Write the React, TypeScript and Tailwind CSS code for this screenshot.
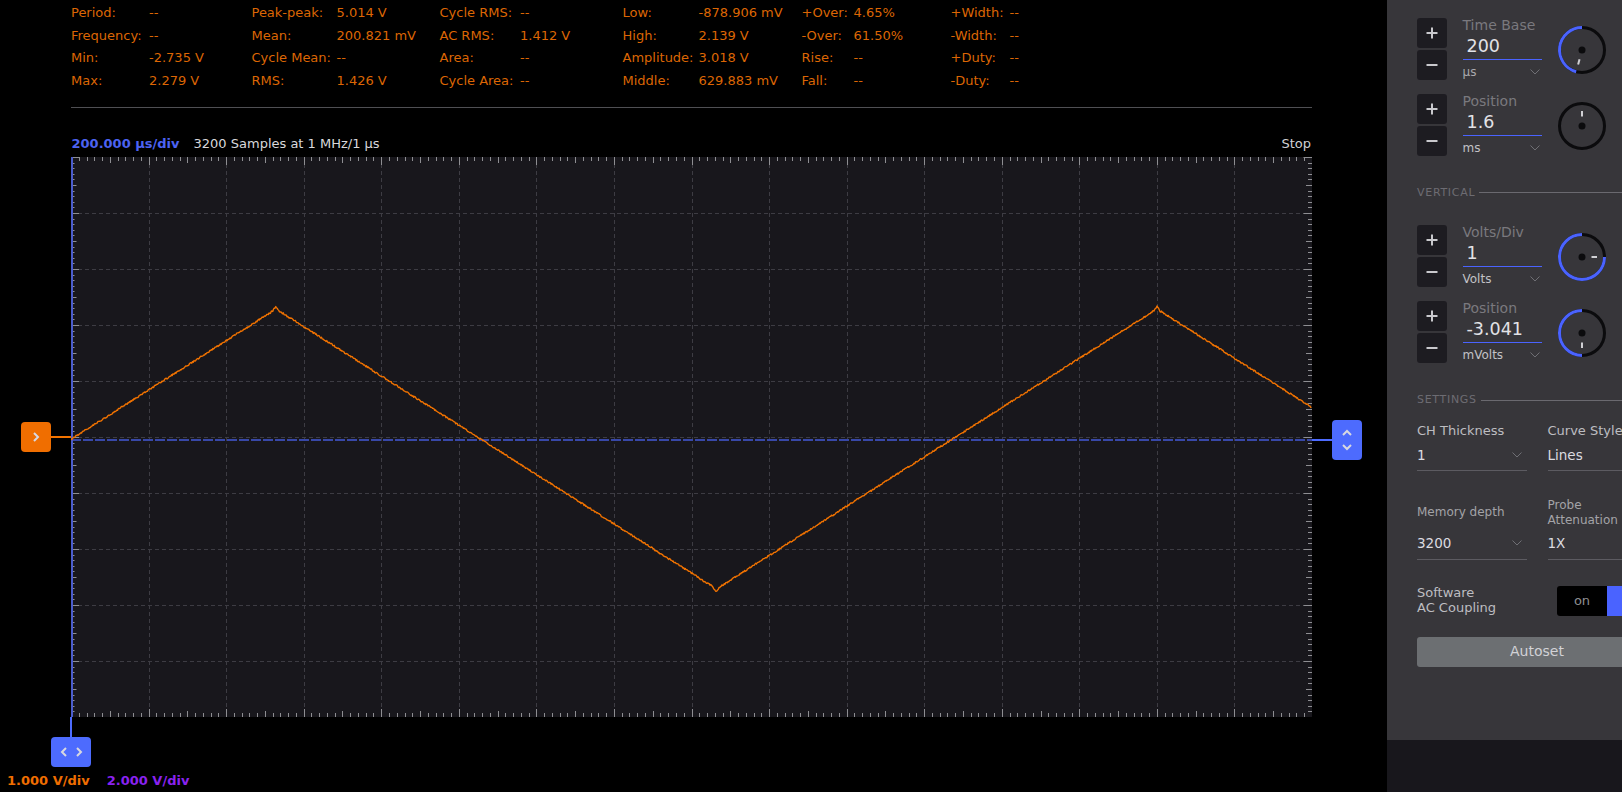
import React from 'react';

type Cell = [string, string];

const rows: Cell[][] = [
    [['Period:', '--'], ['Peak-peak:', '5.014 V'], ['Cycle RMS:', '--'], ['Low:', '-878.906 mV'], ['+Over:', '4.65%'], ['+Width:', '--']],
    [['Frequency:', '--'], ['Mean:', '200.821 mV'], ['AC RMS:', '1.412 V'], ['High:', '2.139 V'], ['-Over:', '61.50%'], ['-Width:', '--']],
    [['Min:', '-2.735 V'], ['Cycle Mean:', '--'], ['Area:', '--'], ['Amplitude:', '3.018 V'], ['Rise:', '--'], ['+Duty:', '--']],
    [['Max:', '2.279 V'], ['RMS:', '1.426 V'], ['Cycle Area:', '--'], ['Middle:', '629.883 mV'], ['Fall:', '--'], ['-Duty:', '--']],
];

const PW = 1241;
const PH = 560;

// triangle wave, peaks at x=205 and x=1086, valley at x=645
function wavePoints() {
    const pts: string[] = [];
    const half = 440.5;
    for (let x = 0; x <= PW; x += 0.75) {
        let p = (((x - 205) % (2 * half)) + 2 * half) % (2 * half);
        let y = p < half ? 152 + p * (280 / half) : 432 - (p - half) * (280 / half);
        const n = Math.sin(x * 12.9898) * 43758.5453;
        y += (n - Math.floor(n) - 0.5) * 1.6;
        // small glitch near the turning points
        const dPeak = Math.min(Math.abs(x - 205), Math.abs(x - 1086));
        if (dPeak < 3) y -= 2.5 - dPeak * 0.6;
        if (Math.abs(x - 645) < 3) y += 2.5 - Math.abs(x - 645) * 0.6;
        pts.push(`${x.toFixed(2)},${y.toFixed(2)}`);
    }
    return pts.join(' ');
}

function Plot() {
    const ticksX = [];
    for (let i = 0; i <= 160; i++) {
        const x = Math.round((i * PW) / 160) + 0.5;
        const len = i % 10 === 0 ? 8 : i % 5 === 0 ? 6 : 4;
        ticksX.push(<line key={'t' + i} x1={x} y1={0} x2={x} y2={len} />);
        ticksX.push(<line key={'b' + i} x1={x} y1={PH} x2={x} y2={PH - len} />);
    }
    const ticksY = [];
    for (let i = 0; i <= 100; i++) {
        const y = Math.round((i * PH) / 100) + 0.5;
        const len = i % 10 === 0 ? 8 : i % 5 === 0 ? 5.5 : 3.5;
        ticksY.push(<line key={'l' + i} x1={0} y1={y} x2={len} y2={y} />);
        ticksY.push(<line key={'r' + i} x1={PW} y1={y} x2={PW - len - 0.5} y2={y} />);
    }
    const gridV = [];
    for (let k = 1; k < 16; k++) {
        const x = Math.round((k * PW) / 16) + 0.5;
        gridV.push(<line key={k} x1={x} y1={0} x2={x} y2={PH} />);
    }
    const gridH = [];
    for (let k = 1; k < 10; k++) {
        const y = k * 56 + 0.5;
        gridH.push(<line key={k} x1={0} y1={y} x2={PW} y2={y} />);
    }
    return (
        <svg width={PW} height={PH} className="block shrink-0 bg-[#18171c]">
            <g stroke="#3d3c43" strokeWidth={1} strokeDasharray="4 3">
                {gridV}
                {gridH}
            </g>
            <g stroke="#8e8e92" strokeWidth={1}>
                {ticksX}
                {ticksY}
            </g>
            <line x1={0} y1={283} x2={PW} y2={283} stroke="#3848a8" strokeWidth={2} strokeDasharray="10 2" />
            <line x1={1} y1={0} x2={1} y2={PH} stroke="#4a5ccc" strokeWidth={2} />
            <polyline points={wavePoints()} fill="none" stroke="#f27300" strokeWidth={1.35} strokeLinejoin="round" />
        </svg>
    );
}

function Chevron({ dir }: { dir: 'left' | 'right' | 'up' | 'down' }) {
    const d = {
        right: 'M2 1 L6 5 L2 9',
        left: 'M6 1 L2 5 L6 9',
        up: 'M1 6 L5 2 L9 6',
        down: 'M1 2 L5 6 L9 2',
    }[dir];
    const horiz = dir === 'left' || dir === 'right';
    return (
        <svg width={horiz ? 8 : 10} height={horiz ? 10 : 8} viewBox={horiz ? '0 0 8 10' : '0 0 10 8'}>
            <path d={d} fill="none" stroke="#d8d8e0" strokeWidth={2} />
        </svg>
    );
}

function Knob({ angle }: { angle: number }) {
    const r = 22.5;
    const c = 25;
    const pt = (a: number, rr: number) => {
        const t = (a * Math.PI) / 180;
        return [c + rr * Math.sin(t), c - rr * Math.cos(t)];
    };
    const [sx, sy] = pt(angle, r);
    const sweep = 360 - angle;
    const [i1x, i1y] = pt(angle, 9.5);
    const [i2x, i2y] = pt(angle, 15);
    return (
        <svg width={50} height={50} className="shrink-0">
            <circle cx={c} cy={c} r={r} fill="none" stroke="#0b0b0d" strokeWidth={3} />
            {angle > 0 && (
                <path d={`M${sx} ${sy} A${r} ${r} 0 ${sweep > 180 ? 1 : 0} 1 ${c} ${c - r}`} fill="none" stroke="#4a63ff" strokeWidth={3} />
            )}
            <circle cx={c} cy={c} r={3.5} fill="#0b0b0d" />
            <line x1={i1x} y1={i1y} x2={i2x} y2={i2y} stroke="#d0d0d4" strokeWidth={2} />
        </svg>
    );
}

function StepButtons() {
    return (
        <div className="flex w-[30px] shrink-0 flex-col gap-[2px]">
            <div className="flex h-[30px] items-center justify-center rounded-[3px] bg-[#1d1c21]">
                <svg width={12} height={12}>
                    <path d="M6 0.5 V11.5 M0.5 6 H11.5" stroke="#c9c9cd" strokeWidth={2} />
                </svg>
            </div>
            <div className="flex h-[30px] items-center justify-center rounded-[3px] bg-[#1d1c21]">
                <svg width={12} height={12}>
                    <path d="M0.5 6 H11.5" stroke="#c9c9cd" strokeWidth={2} />
                </svg>
            </div>
        </div>
    );
}

function SmallDown() {
    return (
        <svg width={10} height={6} className="shrink-0">
            <path d="M0.5 0.5 L5 5 L9.5 0.5" fill="none" stroke="#6f6f74" strokeWidth={1} />
        </svg>
    );
}

function KnobRow({ label, value, unit, unitColor, angle }: { label: string; value: string; unit: string; unitColor: string; angle: number }) {
    return (
        <div className="flex items-start">
            <StepButtons />
            <div className="ml-[15.5px] flex w-[79px] flex-col">
                <div className="h-[14px] text-[14px] leading-[14px] text-[#7a797e]">{label}</div>
                <div className="flex h-[28px] items-end border-b border-[#4a63ff] pb-[2px] pl-[4px] text-[17.5px] leading-[22px] text-[#e2e2e6]">{value}</div>
                <div className={`mt-[5px] flex h-[14px] items-center justify-between pr-[2px] text-[12px] leading-[14px] ${unitColor}`}>
                    <span>{unit}</span>
                    <SmallDown />
                </div>
            </div>
            <div className="ml-[15px] mt-[7px]">
                <Knob angle={angle} />
            </div>
        </div>
    );
}

function SectionTitle({ text, className }: { text: string; className: string }) {
    return (
        <div className={`flex h-[14px] items-center gap-[4px] ${className}`}>
            <span className="text-[11px] leading-[14px] tracking-[0.7px] text-[#6d6c72]">{text}</span>
            <div className="h-px flex-1 bg-[#6a696f]" />
        </div>
    );
}

function SelectCell({ value, chevron }: { value: string; chevron?: boolean }) {
    return (
        <div className="flex h-[32px] w-[110px] items-center justify-between border-b border-[#5c5b61] pr-[5px] text-[13.5px] leading-[32px] text-[#dcdce0]">
            <span>{value}</span>
            {chevron && <SmallDown />}
        </div>
    );
}

function Panel() {
    return (
        <div className="flex w-[300px] shrink-0 flex-col">
            <div className="flex h-[740px] flex-col bg-[#37363a] pl-[30px] pt-[18px]">
                <div className="flex flex-col gap-[14px]">
                    <KnobRow label="Time Base" value="200" unit="µs" unitColor="text-[#a9a9ad]" angle={195} />
                    <KnobRow label="Position" value="1.6" unit="ms" unitColor="text-[#c2c2c6]" angle={0} />
                </div>
                <SectionTitle text="VERTICAL" className="mt-[29.5px]" />
                <div className="mt-[25px] flex flex-col gap-[14.5px]">
                    <KnobRow label="Volts/Div" value="1" unit="Volts" unitColor="text-[#c2c2c6]" angle={90} />
                    <KnobRow label="Position" value="-3.041" unit="mVolts" unitColor="text-[#c2c2c6]" angle={180.01} />
                </div>
                <SectionTitle text="SETTINGS" className="mt-[30px]" />
                <div className="mt-[16px] flex gap-[20.5px]">
                    <div className="flex w-[110px] flex-col">
                        <div className="h-[16px] text-[13px] leading-[16px] text-[#bdbdc1]">CH Thickness</div>
                        <SelectCell value="1" chevron />
                    </div>
                    <div className="flex w-[110px] flex-col">
                        <div className="h-[16px] whitespace-nowrap text-[13px] leading-[16px] text-[#bdbdc1]">Curve Style</div>
                        <SelectCell value="Lines" />
                    </div>
                </div>
                <div className="mt-[26.5px] flex gap-[20.5px]">
                    <div className="flex w-[110px] flex-col">
                        <div className="flex h-[30px] items-center text-[12px] leading-[15px] text-[#a3a3a7]">Memory depth</div>
                        <SelectCell value="3200" chevron />
                    </div>
                    <div className="flex w-[110px] flex-col">
                        <div className="flex h-[30px] flex-col justify-center text-[12px] leading-[15px] text-[#a3a3a7]">
                            <span>Probe</span>
                            <span>Attenuation</span>
                        </div>
                        <SelectCell value="1X" />
                    </div>
                </div>
                <div className="mt-[26.5px] flex items-center">
                    <div className="w-[140px] text-[13px] leading-[14.6px] text-[#bdbdc1]">
                        Software
                        <br />
                        AC Coupling
                    </div>
                    <div className="flex h-[29.5px] w-[100px] overflow-hidden rounded-[3px]">
                        <div className="flex w-[50px] items-center justify-center bg-black text-[13px] text-[#8e8e92]">on</div>
                        <div className="flex-1 bg-[#4a63ff]" />
                    </div>
                </div>
                <div className="mt-[21px] flex h-[30px] w-[240px] items-center justify-center rounded-[3px] bg-[#6c6f72] text-[14px] text-[#d2d2d6]">
                    Autoset
                </div>
            </div>
            <div className="flex-1 bg-[#18171c]" />
        </div>
    );
}

export default function App() {
    const widths = ['w-[78px]', 'w-[102.5px]', 'w-[85px]', 'w-[103px]', 'w-[80.5px]', 'w-[102.5px]', 'w-[76px]', 'w-[103px]', 'w-[52px]', 'w-[97px]', 'w-[59px]', 'w-[60px]'];
    return (
        <div className="flex h-[792px] w-[1622px] overflow-hidden bg-black font-['DejaVu_Sans',sans-serif]">
            <div className="flex w-[1387px] shrink-0 flex-col">
                <div className="flex flex-col pl-[71px] pt-[2px] text-[13px] leading-[22.5px] text-[#dc6604]">
                    {rows.map((row, ri) => (
                        <div key={ri} className="flex">
                            {row.map(([label, value], ci) => (
                                <React.Fragment key={ci}>
                                    <span className={`${widths[ci * 2]} shrink-0 whitespace-nowrap`}>{label}</span>
                                    <span className={`${widths[ci * 2 + 1]} shrink-0 whitespace-nowrap`}>{value}</span>
                                </React.Fragment>
                            ))}
                        </div>
                    ))}
                </div>
                <div className="ml-[71px] mt-[14.5px] h-px w-[1241px] bg-[#4f4f53]" />
                <div className="flex h-[49.5px] items-end pb-[5px] pl-[71.5px] pr-[76px] text-[13px] leading-[16px]">
                    <span className="font-bold text-[#4c63f2]">200.000 µs/div</span>
                    <span className="ml-[14px] text-[#d8d8dc]">3200 Samples at 1 MHz/1 µs</span>
                    <span className="ml-auto text-[#d0d0d4]">Stop</span>
                </div>
                <div className="flex h-[560px]">
                    <div className="relative w-[71px] shrink-0">
                        <div className="absolute left-[50px] top-[278.7px] h-[2px] w-[21px] bg-[#f27300]" />
                        <div className="absolute left-[21px] top-[265px] flex h-[30px] w-[30px] items-center justify-center rounded-[4px] bg-[#f06e00]">
                            <Chevron dir="right" />
                        </div>
                    </div>
                    <Plot />
                    <div className="relative flex-1">
                        <div className="absolute left-0 top-[281.7px] h-[2px] w-[21px] bg-[#4d6bfe]" />
                        <div className="absolute left-[20px] top-[263px] flex h-[40px] w-[30px] flex-col items-center justify-center gap-[6px] rounded-[4px] bg-[#4d6bfe]">
                            <Chevron dir="up" />
                            <Chevron dir="down" />
                        </div>
                    </div>
                </div>
                <div className="relative flex-1">
                    <div className="absolute left-[70px] top-0 h-[20px] w-[2px] bg-[#4d6bfe]" />
                    <div className="absolute left-[51px] top-[20px] flex h-[30px] w-[40px] items-center justify-center gap-[7px] rounded-[4px] bg-[#4d6bfe]">
                        <Chevron dir="left" />
                        <Chevron dir="right" />
                    </div>
                    <div className="flex gap-[17px] pl-[7px] pt-[55.5px] text-[13px] font-bold leading-[16px]">
                        <span className="text-[#f06e00]">1.000 V/div</span>
                        <span className="text-[#8a22f0]">2.000 V/div</span>
                    </div>
                </div>
            </div>
            <Panel />
        </div>
    );
}
